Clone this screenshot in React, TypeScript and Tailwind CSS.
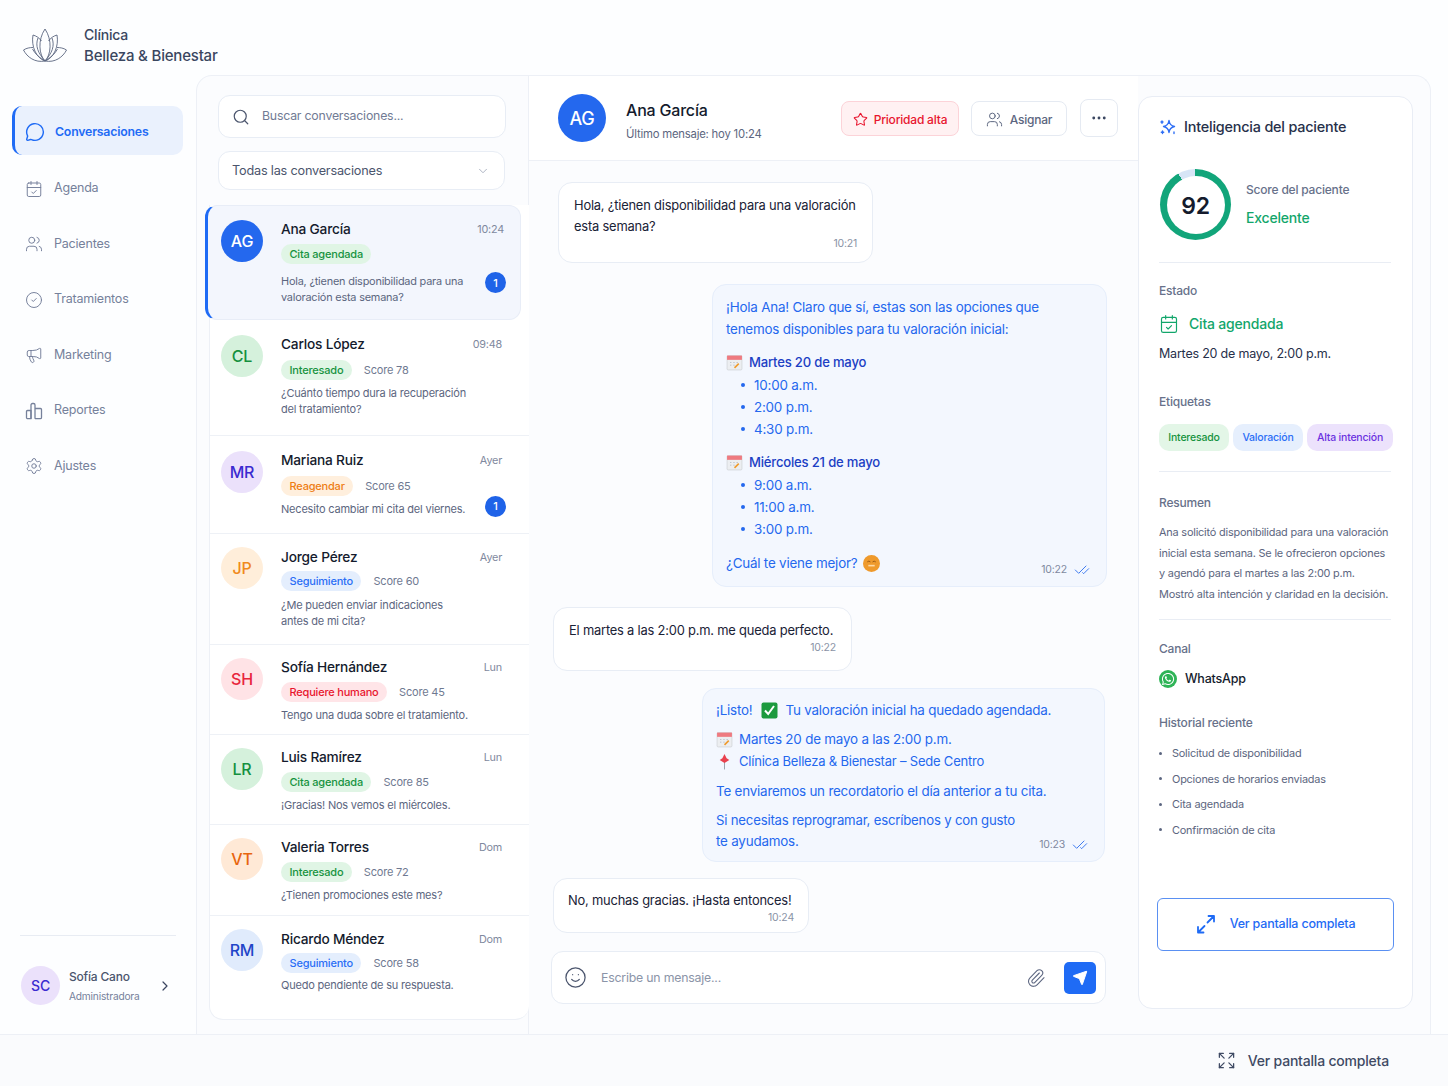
import React from 'react';
import {
  MessageCircle,
  CalendarCheck,
  Users,
  CircleCheck,
  Megaphone,
  Settings,
  Search,
  ChevronDown,
  ChevronRight,
  Star,
  MoreHorizontal,
  CheckCheck,
  Smile,
  Paperclip,
  Send,
  Expand,
} from 'lucide-react';
import { FaWhatsapp } from 'react-icons/fa';

const tagStyles: Record<string, string> = {
  green: 'bg-[#e0f5e5] text-[#17933f]',
  blue: 'bg-[#e4eefd] text-[#2b6ef6]',
  orange: 'bg-[#ffefdd] text-[#ee7d14]',
  red: 'bg-[#ffe5e8] text-[#e8152e]',
  purple: 'bg-[#ece2fc] text-[#6b32e0]',
};

const avatarStyles: Record<string, string> = {
  green: 'bg-[#d5f1dc] text-[#15903f]',
  purple: 'bg-[#ebe1fb] text-[#3a2bd0]',
  orange: 'bg-[#ffeeda] text-[#f08a1c]',
  red: 'bg-[#ffe3e6] text-[#e8253c]',
  peach: 'bg-[#ffe9d6] text-[#e8650f]',
  blue: 'bg-[#e0ebfc] text-[#1f45c8]',
};

const ReportsIcon = () => (
  <svg width="18" height="18" viewBox="0 0 18 18" fill="none" stroke="#76819b" strokeWidth="1.3" strokeLinejoin="round">
    <path d="M1.500 15.500V9.500a1 1 0 0 1 1-1H6v8.200H2.700a1.200 1.200 0 0 1-1.200-1.200Z" />
    <path d="M6 16.700V3a1.500 1.500 0 0 1 1.500-1.500h1A1.500 1.500 0 0 1 10 3v13.700" />
    <path d="M10 6.500h5.500a1 1 0 0 1 1 1v8a1.200 1.200 0 0 1-1.200 1.200H10" />
  </svg>
);

const LotusLogo = () => (
  <svg width="44" height="34" viewBox="0 0 44 34" fill="none" stroke="#5b6680" strokeWidth="0.9" strokeLinejoin="round">
    <path d="M22 33C16 27 14.500 12 22 1 29.500 12 28 27 22 33Z" />
    <path d="M22 33C13 30 8 18 10 7 13.500 8 16.500 10 18.500 13" />
    <path d="M22 33C31 30 36 18 34 7 30.500 8 27.500 10 25.500 13" />
    <path d="M22 33C15 25 12 18 15 10" />
    <path d="M22 33C29 25 32 18 29 10" />
    <path d="M22 33C12 35 4 29 0.500 22 3.500 20 7 19.500 10 19.500" />
    <path d="M22 33C32 35 40 29 43.500 22 40.500 20 37 19.500 34 19.500" />
    <path d="M22 33C17 30 12 26 9.500 21" />
    <path d="M22 33C27 30 32 26 34.500 21" />
  </svg>
);

const SparkIcon = () => (
  <svg width="18" height="18" viewBox="0 0 18 18" fill="none" stroke="#2f6ff5" strokeWidth="1.4" strokeLinejoin="round">
    <path d="M10 2.500C10.500 6 12 7.800 15.500 8.500 12 9.200 10.500 11 10 14.500 9.500 11 8 9.200 4.500 8.500 8 7.800 9.500 6 10 2.500Z" />
    <path d="M3 3v2.200M2 4h2M3.500 13v2.500M2.300 14.200h2.400M15 14v1.500" strokeLinecap="round" />
  </svg>
);

const ArrowsIcon = () => (
  <svg width="20" height="20" viewBox="0 0 20 20" fill="none" stroke="currentColor" strokeWidth="1.800" strokeLinecap="round" strokeLinejoin="round">
    <path d="M11.500 8.500L18 2M12.500 2H18V7.500" />
    <path d="M8.500 12L2 18.500M2 13V18.500H7.500" />
  </svg>
);

const CalendarEmoji = () => (
  <svg width="17" height="17" viewBox="0 0 16 16" className="shrink-0">
    <rect x="1" y="1.500" width="14" height="13.500" rx="1" fill="#eceef1" stroke="#c9ccd2" strokeWidth="0.6" />
    <rect x="1" y="1.500" width="14" height="4" fill="#ee7a80" />
    <path d="M4 8h1M7 8h1M10 8h1M4 10.500h1M7 10.500h1" stroke="#a7adb8" strokeWidth="0.8" />
    <path d="M8 13l4-4" stroke="#ef9a2c" strokeWidth="1.500" />
  </svg>
);

const PinEmoji = () => (
  <svg width="17" height="17" viewBox="0 0 16 16" className="shrink-0">
    <path d="M8 8.500V15.500" stroke="#9da3ad" strokeWidth="1" />
    <path d="M8 1l2 4 2.500 1.500-4.500 3-4.500-3L6 5Z" fill="#e9424e" />
  </svg>
);

const CheckEmoji = () => (
  <svg width="17" height="17" viewBox="0 0 17 17" className="shrink-0">
    <rect x="0.500" y="0.500" width="16" height="16" rx="2" fill="#1c9a3e" />
    <path d="M4 8.500l3.200 3.500L13 4" fill="none" stroke="#fff" strokeWidth="2" />
  </svg>
);

const FaceEmoji = () => (
  <svg width="17" height="17" viewBox="0 0 16 16" className="shrink-0">
    <circle cx="8" cy="8" r="8" fill="#ef9a2c" />
    <path d="M4 6.500q1.500-1.500 3 0M9 6.500q1.500-1.500 3 0" fill="none" stroke="#9a5a14" strokeWidth="0.9" />
    <path d="M5 10h6" stroke="#ffd9a3" strokeWidth="1.500" />
  </svg>
);

const navItems = [
  { label: 'Agenda', icon: <CalendarCheck size={18} strokeWidth={1.3} /> },
  { label: 'Pacientes', icon: <Users size={18} strokeWidth={1.3} /> },
  { label: 'Tratamientos', icon: <CircleCheck size={18} strokeWidth={1.3} /> },
  { label: 'Marketing', icon: <Megaphone size={18} strokeWidth={1.3} /> },
  { label: 'Reportes', icon: <ReportsIcon /> },
  { label: 'Ajustes', icon: <Settings size={18} strokeWidth={1.3} /> },
];

const conversations = [
  { initials: 'CL', name: 'Carlos López', time: '09:48', tag: 'Interesado', tagColor: 'green', score: 'Score 78', color: 'green', height: 'h-[116px]', top: 'pt-[15px]', tagMt: 'mt-[7px]', textMt: 'mt-[5px]', lines: ['¿Cuánto tiempo dura la recuperación', 'del tratamiento?'] },
  { initials: 'MR', name: 'Mariana Ruiz', time: 'Ayer', tag: 'Reagendar', tagColor: 'orange', score: 'Score 65', color: 'purple', height: 'h-[98px]', top: 'pt-[15px]', tagMt: 'mt-[7px]', textMt: 'mt-[5px]', lines: ['Necesito cambiar mi cita del viernes.'], unread: true },
  { initials: 'JP', name: 'Jorge Pérez', time: 'Ayer', tag: 'Seguimiento', tagColor: 'blue', score: 'Score 60', color: 'orange', height: 'h-[111px]', top: 'pt-[13px]', nameMt: 'mt-[1px]', tagMt: 'mt-[5px]', textMt: 'mt-[6px]', lines: ['¿Me pueden enviar indicaciones', 'antes de mi cita?'] },
  { initials: 'SH', name: 'Sofía Hernández', time: 'Lun', tag: 'Requiere humano', tagColor: 'red', score: 'Score 45', color: 'red', height: 'h-[90px]', top: 'pt-[13px]', tagMt: 'mt-[6px]', textMt: 'mt-[5px]', lines: ['Tengo una duda sobre el tratamiento.'] },
  { initials: 'LR', name: 'Luis Ramírez', time: 'Lun', tag: 'Cita agendada', tagColor: 'green', score: 'Score 85', color: 'green', height: 'h-[90px]', top: 'pt-[13px]', tagMt: 'mt-[6px]', textMt: 'mt-[5px]', lines: ['¡Gracias! Nos vemos el miércoles.'] },
  { initials: 'VT', name: 'Valeria Torres', time: 'Dom', tag: 'Interesado', tagColor: 'green', score: 'Score 72', color: 'peach', height: 'h-[91px]', top: 'pt-[13px]', tagMt: 'mt-[6px]', textMt: 'mt-[5px]', lines: ['¿Tienen promociones este mes?'] },
  { initials: 'RM', name: 'Ricardo Méndez', time: 'Dom', tag: 'Seguimiento', tagColor: 'blue', score: 'Score 58', color: 'blue', height: 'h-[103px]', top: 'pt-[13px]', nameMt: 'mt-[1px]', tagMt: 'mt-[5px]', textMt: 'mt-[4px]', lines: ['Quedo pendiente de su respuesta.'] },
];

const Tag = ({ label, color }: { label: string; color: string }) => (
  <span className={`inline-flex h-[20px] items-center rounded-full px-[8.500px] text-[11px] font-medium ${tagStyles[color]}`}>{label}</span>
);

const Unread = ({ className }: { className: string }) => (
  <span className={`flex h-[21px] w-[21px] shrink-0 items-center justify-center rounded-full bg-[#1f63e8] text-[11px] font-medium text-white ${className}`}>1</span>
);

const Incoming = ({ className, children, time }: { className: string; children: React.ReactNode; time: string }) => (
  <div className={`whitespace-nowrap rounded-[14px] border border-[#e8edf5] bg-white text-[12.900px] leading-[21px] text-[#1a2236] ${className}`}>
    {children}
    <p className="text-right text-[10.500px] leading-[14px] text-[#8a93a6]">{time}</p>
  </div>
);

const SectionLabel = ({ className, children }: { className: string; children: React.ReactNode }) => (
  <p className={`text-[12px] font-medium leading-[16px] text-[#67718a] ${className}`}>{children}</p>
);

const Divider = ({ className }: { className: string }) => <div className={`h-px w-[232px] bg-[#e9edf4] ${className}`} />;

const App = () => {
  return (
    <div className="flex h-[1086px] w-[1448px] flex-col overflow-hidden bg-[#fdfeff] font-['Inter',sans-serif] text-[13px] tracking-[-0.2px]">
      {/* Logo */}
      <header className="flex h-[75px] shrink-0 items-center gap-[17px] pl-[23px] pt-[15px]">
        <LotusLogo />
        <div className="text-[14px] font-medium leading-[21px] text-[#3a4660]">
          <p>Clínica</p>
          <p className="text-[15px]">Belleza &amp; Bienestar</p>
        </div>
      </header>

      <div className="flex min-h-0 flex-1">
        {/* Sidebar */}
        <aside className="flex w-[196px] shrink-0 flex-col pt-[31px]">
          <nav className="flex flex-col gap-[6.500px] pl-[12px] pr-[13px]">
            <a className="mb-[1px] flex h-[49px] items-center gap-[10px] rounded-[10px] border-l-[3px] border-[#1f6bf5] bg-[#eaf1fd] pl-[10px] pt-[3px] text-[12.300px] font-semibold text-[#1f6bf5]">
              <MessageCircle size={20} strokeWidth={1.7} />
              Conversaciones
            </a>
            {navItems.map((item) => (
              <a key={item.label} className="flex h-[49px] items-center gap-[11px] pl-[13px] pt-[3px] text-[12.500px] text-[#76819b]">
                <span className="flex w-[18px] justify-center">{item.icon}</span>
                {item.label}
              </a>
            ))}
          </nav>
          <div className="mx-[20px] mt-auto w-[156px] border-t border-[#e8ecf3] pb-[29px] pl-[1px] pr-[3px] pt-[30px]">
            <div className="flex items-center">
              <span className="flex h-[39px] w-[39px] items-center justify-center rounded-full bg-[#ebe1fb] text-[14px] font-medium text-[#3a2bd0]">SC</span>
              <div className="ml-[9px] flex-1">
                <p className="text-[12px] font-medium leading-[18px] text-[#4b556d]">Sofía Cano</p>
                <p className="mt-[3px] text-[10.200px] leading-[14px] text-[#76819b]">Administradora</p>
              </div>
              <ChevronRight size={16} strokeWidth={1.8} className="text-[#3a4660]" />
            </div>
          </div>
        </aside>

        <main className="mr-[17px] flex min-w-0 flex-1 rounded-t-[16px] border border-b-0 border-[#edf0f6] bg-[#fbfcfe]">
          {/* Conversation list */}
          <section className="flex w-[332px] shrink-0 flex-col border-r border-[#edf0f6]">
            <div className="ml-[21px] mt-[19px] flex h-[43px] w-[288px] items-center gap-[12px] rounded-[12px] border border-[#e8edf5] bg-white pl-[13px] text-[12.300px] text-[#717b94]">
              <Search size={18} strokeWidth={1.6} className="text-[#4b556d]" />
              Buscar conversaciones...
            </div>
            <div className="ml-[21px] mt-[13px] flex h-[39px] w-[287px] items-center justify-between rounded-[12px] border border-[#e8edf5] bg-white pl-[13px] pr-[14px] pt-[1px] text-[12.700px] text-[#4b556d]">
              Todas las conversaciones
              <ChevronDown size={14} strokeWidth={1.4} className="text-[#9aa3b5]" />
            </div>
            <div className="ml-[12px] mt-[15px] flex w-[320px] flex-col rounded-b-[14px] border-b border-l border-[#edf0f6] bg-white">
              {/* Active conversation */}
              <div className="-ml-[5px] flex h-[115px] w-[316px] rounded-[12px] border border-l-[3px] border-[#e8edf7] border-l-[#1f6bf5] bg-[#f3f6fd] pl-[13px] pr-[14px] pt-[14px]">
                <span className="flex h-[42px] w-[42px] shrink-0 items-center justify-center rounded-full bg-[#2468ee] text-[16px] font-medium text-white">AG</span>
                <div className="ml-[18px] min-w-0 flex-1">
                  <div className="flex items-start justify-between">
                    <p className="text-[13.700px] font-medium leading-[18px] text-[#141b2d]">Ana García</p>
                    <span className="mr-[2px] mt-[2px] text-[10.800px] text-[#7f899e]">10:24</span>
                  </div>
                  <div className="mt-[6px]"><Tag label="Cita agendada" color="green" /></div>
                  <div className="mt-[9px] flex items-start justify-between">
                    <p className="text-[10.900px] leading-[16px] text-[#5c6680]">
                      Hola, ¿tienen disponibilidad para una<br />valoración esta semana?
                    </p>
                    <Unread className="-mt-[1px]" />
                  </div>
                </div>
              </div>
              {conversations.map((c, i) => (
                <div key={c.initials} className={`flex pl-[11px] pr-[27px] ${c.height} ${c.top} ${i < conversations.length - 1 ? 'border-b border-[#eef1f6]' : ''}`}>
                  <span className={`flex h-[42px] w-[42px] shrink-0 items-center justify-center rounded-full text-[16px] font-medium ${avatarStyles[c.color]}`}>{c.initials}</span>
                  <div className="ml-[18px] min-w-0 flex-1">
                    <div className={`flex items-start justify-between ${c.nameMt ?? ''}`}>
                      <p className="text-[13.700px] font-medium leading-[18px] text-[#141b2d]">{c.name}</p>
                      <span className="mt-[2px] text-[10.800px] text-[#7f899e]">{c.time}</span>
                    </div>
                    <div className={`flex items-center gap-[12px] ${c.tagMt}`}>
                      <Tag label={c.tag} color={c.tagColor} />
                      <span className="text-[11px] text-[#6f7991]">{c.score}</span>
                    </div>
                    <div className={`flex items-start justify-between ${c.textMt}`}>
                      <p className="text-[11px] leading-[16px] text-[#5c6680]">
                        {c.lines.map((line) => (
                          <span key={line} className="block">{line}</span>
                        ))}
                      </p>
                      {c.unread && <Unread className="-mr-[4px] -mt-[5px]" />}
                    </div>
                  </div>
                </div>
              ))}
            </div>
          </section>

          {/* Chat */}
          <section className="flex w-[609px] shrink-0 flex-col">
            <div className="flex h-[85px] shrink-0 items-center border-b border-[#edf0f6] bg-white pl-[29px] pr-[20px]">
              <span className="flex h-[48px] w-[48px] items-center justify-center rounded-full bg-[#2468ee] text-[18px] font-medium text-white">AG</span>
              <div className="ml-[20px] mt-[4px]">
                <p className="text-[16px] font-medium leading-[20px] text-[#141b2d]">Ana García</p>
                <p className="mt-[7px] text-[11.300px] leading-[14px] text-[#5c6680]">Último mensaje: hoy 10:24</p>
              </div>
              <button className="ml-auto mt-[1px] flex h-[35px] w-[118px] items-center justify-center gap-[6px] rounded-[8px] border border-[#fcd3d8] bg-[#fff1f2] pt-[2px] text-[12px] font-medium text-[#e8152e]">
                <Star size={15} strokeWidth={1.7} />
                Prioridad alta
              </button>
              <button className="ml-[12px] mt-[1px] flex h-[35px] w-[96px] items-center justify-center gap-[7px] rounded-[8px] border border-[#e5eaf2] bg-white pt-[2px] text-[12px] font-medium text-[#5c6680]">
                <Users size={17} strokeWidth={1.4} />
                Asignar
              </button>
              <button className="ml-[13px] flex h-[38px] w-[38px] items-center justify-center rounded-[8px] border border-[#e5eaf2] bg-white text-[#3a4660]">
                <MoreHorizontal size={18} strokeWidth={1.8} />
              </button>
            </div>

            <div className="flex flex-col pt-[21px]">
              <Incoming className="ml-[29px] h-[81px] w-[315px] px-[15px] pt-[12px]" time="10:21">
                <p>Hola, ¿tienen disponibilidad para una valoración<br />esta semana?</p>
              </Incoming>

              <div className="ml-[183px] mt-[21px] h-[303px] w-[395px] rounded-[14px] border border-[#e6eefb] bg-[#f3f7fe] px-[13px] pt-[11px] text-[13.400px] leading-[22px] text-[#2468ee]">
                <p>¡Hola Ana! Claro que sí, estas son las opciones que<br />tenemos disponibles para tu valoración inicial:</p>
                {[
                  { day: 'Martes 20 de mayo', hours: ['10:00 a.m.', '2:00 p.m.', '4:30 p.m.'] },
                  { day: 'Miércoles 21 de mayo', hours: ['9:00 a.m.', '11:00 a.m.', '3:00 p.m.'] },
                ].map((block) => (
                  <div key={block.day} className="mt-[11px]">
                    <p className="flex items-center gap-[6px] text-[13.100px] font-medium text-[#1c3fc4]"><CalendarEmoji />{block.day}</p>
                    <ul className="mt-px">
                      {block.hours.map((h) => (
                        <li key={h} className="flex items-center gap-[9px] pl-[15px]">
                          <span className="h-[4px] w-[4px] rounded-full bg-[#2468ee]" />
                          {h}
                        </li>
                      ))}
                    </ul>
                  </div>
                ))}
                <div className="mt-[12px] flex items-start justify-between">
                  <p className="flex items-center gap-[6px]">¿Cuál te viene mejor? <FaceEmoji /></p>
                  <span className="mt-[7px] flex items-center gap-[7px] pr-[3px] text-[10.500px] text-[#7f899e]">
                    10:22 <CheckCheck size={16} strokeWidth={1.3} className="text-[#2468ee]" />
                  </span>
                </div>
              </div>

              <Incoming className="ml-[24px] mt-[20px] h-[64px] w-[299px] px-[15px] pt-[12px]" time="10:22">
                <p>El martes a las 2:00 p.m. me queda perfecto.</p>
              </Incoming>

              <div className="ml-[173px] mt-[17px] h-[174px] w-[403px] rounded-[14px] border border-[#e6eefb] bg-[#f3f7fe] px-[13px] pt-[11px] text-[13.400px] leading-[21px] text-[#2468ee]">
                <p className="flex items-center gap-[7px]"><span className="mr-[2px]">¡Listo!</span> <CheckEmoji /> Tu valoración inicial ha quedado agendada.</p>
                <p className="mt-[8px] flex items-center gap-[6px]"><CalendarEmoji />Martes 20 de mayo a las 2:00 p.m.</p>
                <p className="mt-px flex items-center gap-[6px] text-[13px]"><PinEmoji />Clínica Belleza &amp; Bienestar – Sede Centro</p>
                <p className="mt-[9px]">Te enviaremos un recordatorio el día anterior a tu cita.</p>
                <p className="mt-[8px] text-[13.200px]">Si necesitas reprogramar, escríbenos y con gusto</p>
                <div className="flex items-start justify-between">
                  <p>te ayudamos.</p>
                  <span className="mt-[3px] flex items-center gap-[7px] pr-[3px] text-[10.500px] text-[#7f899e]">
                    10:23 <CheckCheck size={16} strokeWidth={1.3} className="text-[#2468ee]" />
                  </span>
                </div>
              </div>

              <Incoming className="ml-[24px] mt-[16px] h-[55px] w-[256px] px-[14px] pt-[11px]" time="10:24">
                <p>No, muchas gracias. ¡Hasta entonces!</p>
              </Incoming>

              <div className="ml-[22px] mt-[18px] flex h-[53px] w-[555px] items-center rounded-[12px] border border-[#e8edf5] bg-white pl-[12px] pr-[9px]">
                <Smile size={23} strokeWidth={1.3} className="text-[#4b556d]" />
                <span className="ml-[14px] pt-[1px] text-[12.300px] text-[#8b94a8]">Escribe un mensaje...</span>
                <Paperclip size={20} strokeWidth={1.3} className="ml-auto text-[#5c6680]" />
                <span className="ml-[18px] flex h-[32px] w-[32px] items-center justify-center rounded-[5px] bg-[#1f6bf5] text-white">
                  <Send size={16} fill="#fff" strokeWidth={1.500} />
                </span>
              </div>
            </div>
          </section>

          {/* Patient panel */}
          <section className="mt-[20px] h-[913px] w-[275px] shrink-0 rounded-[14px] border border-[#e9edf5] bg-white pl-[20px]">
            <div className="mt-[20px] flex h-[20px] items-center gap-[7px]">
              <SparkIcon />
              <p className="text-[14.400px] font-medium text-[#27304a]">Inteligencia del paciente</p>
            </div>
            <div className="ml-[1px] mt-[32px] flex items-center gap-[15px]">
              <div className="flex h-[71px] w-[71px] items-center justify-center rounded-full [background:conic-gradient(#12a57a_0deg_331deg,#d7e5f6_331deg_360deg)]">
                <div className="flex h-[58px] w-[58px] items-center justify-center rounded-full bg-white pt-[3px] text-[23px] font-semibold text-[#141b2d]">92</div>
              </div>
              <div>
                <p className="text-[12px] font-medium leading-[16px] text-[#67718a]">Score del paciente</p>
                <p className="mt-[10px] text-[14px] font-medium leading-[20px] text-[#12a66b]">Excelente</p>
              </div>
            </div>
            <Divider className="mt-[22px]" />
            <SectionLabel className="mt-[20px]">Estado</SectionLabel>
            <div className="mt-[15px] flex items-center gap-[10px] text-[#12a66b]">
              <CalendarCheck size={20} strokeWidth={1.4} />
              <p className="text-[14px] font-medium leading-[20px]">Cita agendada</p>
            </div>
            <p className="mt-[10px] text-[12.500px] leading-[20px] text-[#27304a]">Martes 20 de mayo, 2:00 p.m.</p>
            <SectionLabel className="mt-[30px]">Etiquetas</SectionLabel>
            <div className="mt-[14px] flex gap-[4px] text-[10.500px] font-medium">
              <span className="flex h-[27px] w-[70px] items-center justify-center rounded-[10px] bg-[#e3f6e7] text-[#17933f]">Interesado</span>
              <span className="flex h-[27px] w-[70px] items-center justify-center rounded-[10px] bg-[#e6effd] text-[#2b6ef6]">Valoración</span>
              <span className="flex h-[27px] w-[86px] items-center justify-center rounded-[10px] bg-[#ece2fc] text-[#6b32e0]">Alta intención</span>
            </div>
            <Divider className="mt-[20px]" />
            <SectionLabel className="mt-[23px]">Resumen</SectionLabel>
            <p className="mt-[11px] text-[10.900px] leading-[20.600px] text-[#5c6680]">
              Ana solicitó disponibilidad para una valoración<br />
              inicial esta semana. Se le ofrecieron opciones<br />
              y agendó para el martes a las 2:00 p.m.<br />
              Mostró alta intención y claridad en la decisión.
            </p>
            <Divider className="mt-[15px]" />
            <SectionLabel className="mt-[21px]">Canal</SectionLabel>
            <div className="mt-[13px] flex items-center gap-[8px]">
              <span className="flex h-[18px] w-[18px] items-center justify-center rounded-full bg-[#2fb457] text-white">
                <FaWhatsapp size={14} />
              </span>
              <p className="text-[12.500px] font-medium leading-[18px] text-[#141b2d]">WhatsApp</p>
            </div>
            <SectionLabel className="mt-[27px]">Historial reciente</SectionLabel>
            <ul className="mt-[14px] flex flex-col gap-[9.500px] text-[10.900px] leading-[16px] text-[#5c6680]">
              {['Solicitud de disponibilidad', 'Opciones de horarios enviadas', 'Cita agendada', 'Confirmación de cita'].map((t) => (
                <li key={t} className="flex items-center gap-[10px]">
                  <span className="h-[3px] w-[3px] rounded-full bg-[#5c6680]" />
                  {t}
                </li>
              ))}
            </ul>
            <button className="-ml-[2px] mt-[60px] flex h-[53px] w-[237px] items-center justify-center gap-[14px] rounded-[6px] border-[1.500px] border-[#5a90f2] bg-white text-[12.500px] font-medium text-[#1f6bf5]">
              <ArrowsIcon />
              Ver pantalla completa
            </button>
          </section>
        </main>
      </div>

      {/* Footer */}
      <footer className="flex h-[52px] shrink-0 items-center justify-end gap-[12px] border-t border-[#edf0f6] bg-[#fafbfd] pr-[59px] text-[14px] font-medium text-[#3f4a64]">
        <Expand size={19} strokeWidth={1.6} />
        Ver pantalla completa
      </footer>
    </div>
  );
};

export default App;
